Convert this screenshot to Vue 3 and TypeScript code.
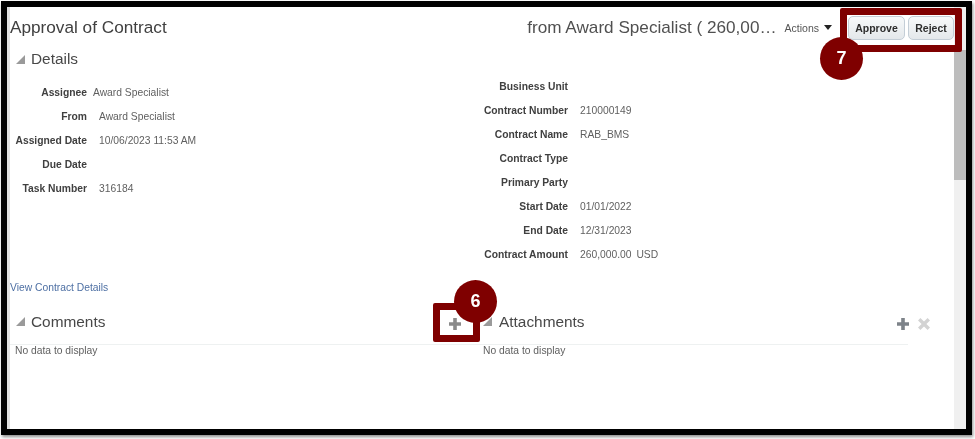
<script setup lang="ts">
interface Field { label: string; value: string; tight?: boolean; wide?: boolean }
const left: Field[] = [
  { label: 'Assignee', value: 'Award Specialist', tight: true },
  { label: 'From', value: 'Award Specialist' },
  { label: 'Assigned Date', value: '10/06/2023 11:53 AM' },
  { label: 'Due Date', value: '' },
  { label: 'Task Number', value: '316184' },
]
const right: Field[] = [
  { label: 'Business Unit', value: '' },
  { label: 'Contract Number', value: '210000149' },
  { label: 'Contract Name', value: 'RAB_BMS' },
  { label: 'Contract Type', value: '' },
  { label: 'Primary Party', value: '' },
  { label: 'Start Date', value: '01/01/2022' },
  { label: 'End Date', value: '12/31/2023' },
  { label: 'Contract Amount', value: '260,000.00 USD', wide: true },
]
</script>

<template>
  <div class="shot">
    <div class="frame">
      <div class="gutter"></div>
      <main class="page">
        <header class="head">
          <h1 class="title">Approval of Contract</h1>
          <div class="head-right">
            <span class="subject">from Award Specialist ( 260,00…</span>
            <span class="actions">Actions<i class="caret"></i></span>
            <div class="buttons">
              <button class="btn approve">Approve</button>
              <button class="btn reject">Reject</button>
              <span class="callout-box box-7"></span>
              <span class="badge badge-7">7</span>
            </div>
          </div>
        </header>

        <h2 class="section details-h"><i class="tri"></i>Details</h2>

        <div class="details">
          <div class="col col-left">
            <div v-for="f in left" :key="f.label" class="row">
              <span class="lab">{{ f.label }}</span>
              <span class="val" :class="{ tight: f.tight }">{{ f.value }}</span>
            </div>
          </div>
          <div class="col col-right">
            <div v-for="f in right" :key="f.label" class="row">
              <span class="lab">{{ f.label }}</span>
              <span class="val" :class="{ wide: f.wide }">{{ f.value }}</span>
            </div>
          </div>
        </div>

        <a class="link">View Contract Details</a>

        <div class="panels">
          <section class="panel comments">
            <div class="panel-head">
              <h2 class="section"><i class="tri"></i>Comments</h2>
              <svg class="plus grey" width="14" height="14" viewBox="0 0 14 14"><path d="M5.2 1h3.6v4.2H13v3.6H8.8V13H5.2V8.8H1V5.2h4.2z" /></svg>
              <span class="callout-box box-6"></span>
              <span class="badge badge-6">6</span>
            </div>
            <p class="empty">No data to display</p>
          </section>
          <section class="panel attachments">
            <div class="panel-head">
              <h2 class="section"><i class="tri"></i>Attachments</h2>
              <span class="tools">
                <svg class="plus" width="14" height="14" viewBox="0 0 14 14"><path d="M5.2 1h3.6v4.2H13v3.6H8.8V13H5.2V8.8H1V5.2h4.2z" /></svg>
                <svg class="cross" width="14" height="14" viewBox="0 0 14 14"><path d="M3.4 1 7 4.6 10.6 1 13 3.4 9.4 7 13 10.6 10.6 13 7 9.4 3.4 13 1 10.6 4.6 7 1 3.4z" /></svg>
              </span>
            </div>
            <p class="empty">No data to display</p>
          </section>
        </div>
      </main>
      <div class="scrollbar"><div class="thumb"></div></div>
    </div>
  </div>
</template>

<style>
html, body { margin: 0; background: #fff; }
</style>

<style scoped>
.shot {
  width: 975px;
  height: 439px;
  box-sizing: border-box;
  padding: 1px 3px 4px 1px;
  background: #fff;
  overflow: hidden;
  font-family: "Liberation Sans", Arial, sans-serif;
  color: #4a4a4a;
  filter: blur(0.35px);
}
.frame {
  display: flex;
  height: 100%;
  box-sizing: border-box;
  border: 6px solid #000;
  background: #fff;
  box-shadow: 1px 2px 3px rgba(0, 0, 0, 0.45);
}
.gutter { width: 3px; background: #dedede; flex: none; }
.page { flex: 1; min-width: 0; display: flex; flex-direction: column; }
.scrollbar { width: 12px; flex: none; background: #f0f0f0; }
.thumb { width: 100%; height: 130px; margin-top: 43px; background: #bdbdbd; }

.head { display: flex; align-items: center; justify-content: space-between; height: 41px; }
.title { margin: 0; font-size: 17.2px; font-weight: 400; color: #404040; }
.head-right { display: flex; align-items: center; }
.subject { font-size: 17.15px; color: #505050; }
.actions { margin-left: 8px; font-size: 10.5px; color: #555; display: inline-flex; align-items: center; }
.caret {
  display: inline-block; margin-left: 5px; width: 0; height: 0;
  border-left: 4px solid transparent; border-right: 4px solid transparent; border-top: 5px solid #222;
}
.buttons { position: relative; display: flex; gap: 3px; margin-left: 16px; }
.btn {
  height: 24px; padding: 0; border: 1px solid #c4ced7; border-radius: 5px;
  background: linear-gradient(#f7f9fa, #e4e8eb);
  font: 700 10.5px "Liberation Sans", Arial, sans-serif; color: #2e2e2e;
}
.approve { width: 57px; }
.reject { width: 46px; }
.callout-box {
  position: absolute; box-sizing: border-box; border: 7px solid #7f0000; border-radius: 2px;
  background: transparent; pointer-events: none;
}
.box-7 { left: -8px; top: -8px; width: 122px; height: 44px; }
.badge {
  position: absolute; width: 43px; height: 43px; border-radius: 50%;
  background: #7f0000; color: #fff; font-weight: 700; font-size: 18px;
  display: flex; align-items: center; justify-content: center;
}
.badge-7 { left: -28px; top: 21px; }

.section { margin: 0; font-size: 15.4px; font-weight: 400; color: #484848; display: flex; align-items: center; line-height: 18px; }
.tri {
  display: inline-block; width: 0; height: 0; margin-right: 6px;
  border-left: 9px solid transparent; border-bottom: 9px solid #9a9a9a;
}
.details-h { margin: 2px 0 0 6px; }

.details { display: flex; height: 214px; }
.col { font-size: 10.3px; }
.col-left { width: 470px; padding-top: 12px; }
.col-right { margin-top: 6px; }
.row { display: flex; height: 24px; align-items: center; }
.lab { font-weight: 700; color: #404040; text-align: right; }
.col-left .lab { width: 77px; }
.col-right .lab { width: 88px; }
.val { color: #5f5f5f; margin-left: 12px; white-space: nowrap; }
.val.tight { margin-left: 6px; }
.val.wide { word-spacing: 2px; }

.link { font-size: 10.3px; color: #4d6fa3; line-height: 12px; }

.panels { display: flex; margin-top: 5px; }
.panel { flex: none; }
.comments { width: 468px; }
.attachments { width: 430px; }
.panel-head {
  position: relative; display: flex; align-items: center; justify-content: space-between;
  height: 45px; padding: 0 0 0 6px; border-bottom: 1px solid #eef1f1;
}
.attachments .panel-head { padding-left: 5px; }
.attachments .tri { margin-right: 7px; }
.plus { fill: #7d8389; display: block; }
.plus.grey { fill: #8a8a8a; margin: 4px 16px 0 0; }
.tools { display: flex; gap: 7px; margin: 4px -23px 0 0; }
.cross { fill: #d3d3d3; }
.box-6 { right: -2px; top: 4px; width: 47px; height: 39px; }
.badge-6 { right: -19px; top: -19px; }
.empty { margin: 0; padding: 0 0 0 5px; font-size: 10.3px; color: #5f5f5f; line-height: 12px; }
</style>
